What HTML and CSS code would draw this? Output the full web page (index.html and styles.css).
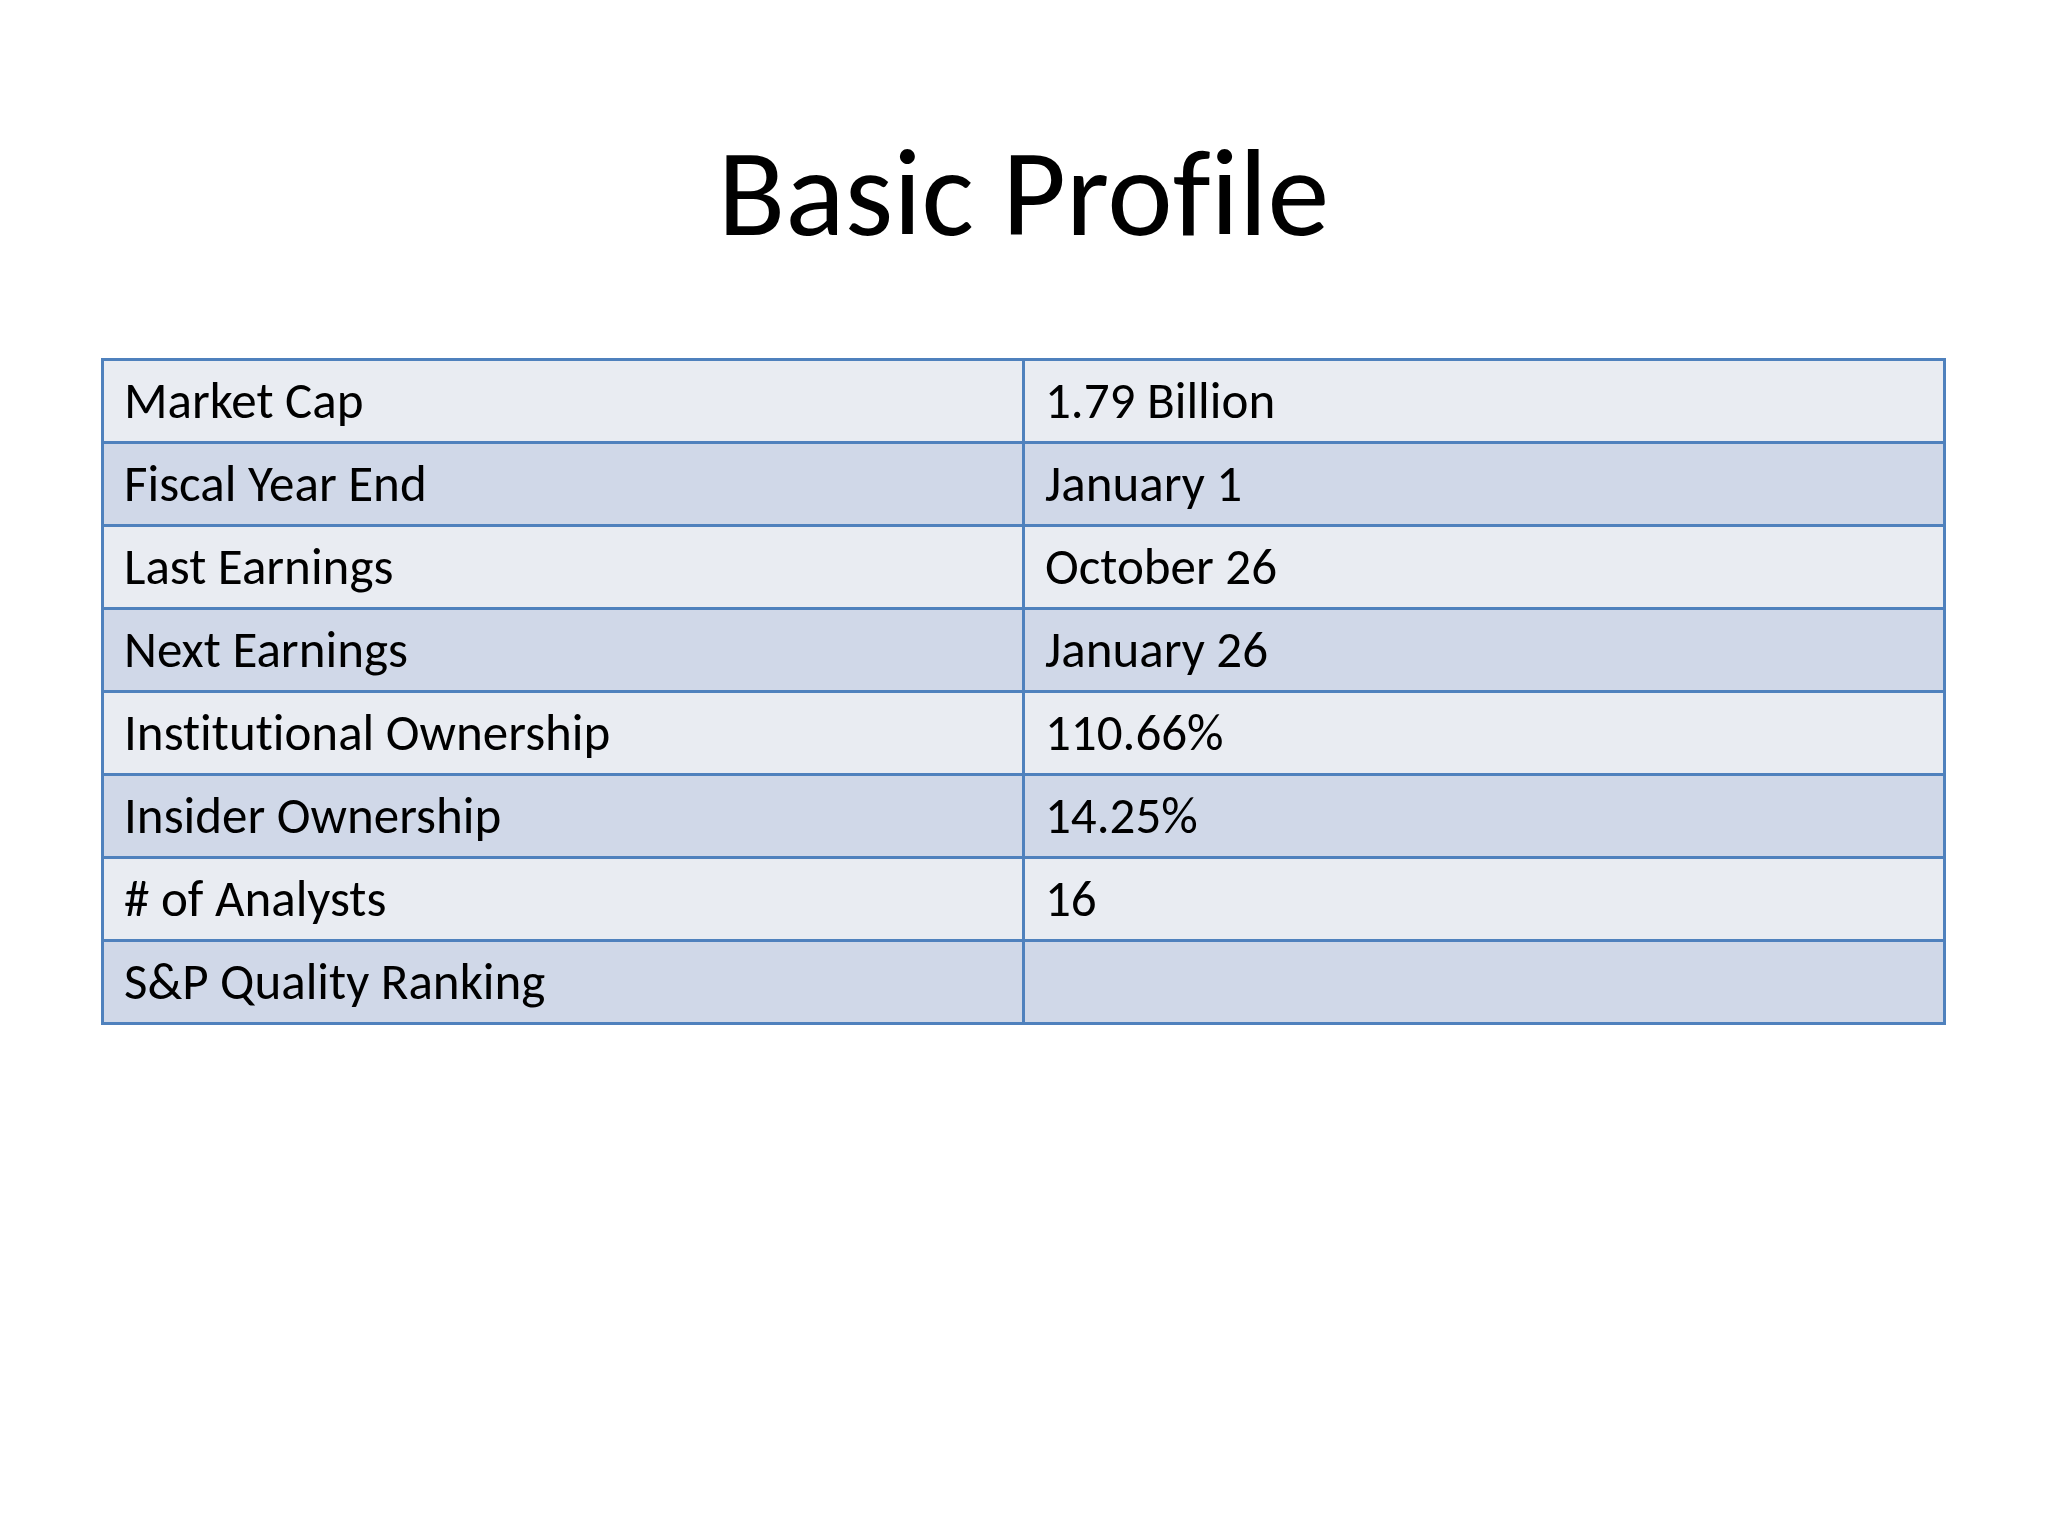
FILE: index.html
```html
<!DOCTYPE html>
<html>
<head>
<meta charset="utf-8">
<link rel="stylesheet" href="styles.css">
</head>
<body>
<div class="slide">
  <h1 class="title">Basic Profile</h1>
  <table class="profile">
    <tr class="odd"><td>Market Cap</td><td>1.79 Billion</td></tr>
    <tr class="even"><td>Fiscal Year End</td><td>January 1</td></tr>
    <tr class="odd"><td>Last Earnings</td><td>October 26</td></tr>
    <tr class="even"><td>Next Earnings</td><td>January 26</td></tr>
    <tr class="odd"><td>Institutional Ownership</td><td>110.66%</td></tr>
    <tr class="even"><td>Insider Ownership</td><td>14.25%</td></tr>
    <tr class="odd"><td># of Analysts</td><td>16</td></tr>
    <tr class="even"><td>S&amp;P Quality Ranking</td><td></td></tr>
  </table>
</div>
</body>
</html>
```

FILE: styles.css
```css
html, body {
  margin: 0;
  padding: 0;
  background: #ffffff;
}
.slide {
  width: 2048px;
  height: 1536px;
  box-sizing: border-box;
  padding: 128px 102px 0 101px;
  font-family: Carlito, Lato, "Open Sans", sans-serif;
  font-variant-ligatures: none;
  color: #000;
}
.title {
  margin: 0;
  font-weight: normal;
  font-size: 124px;
  line-height: 130px;
  text-align: center;
  height: 130px;
}
.profile {
  margin-top: 100px;
  width: 1845px;
  border-collapse: collapse;
  table-layout: fixed;
}
.profile td {
  width: 50%;
  height: 80px;
  box-sizing: border-box;
  border: 3px solid #4f81bd;
  padding: 0 0 0 20px;
  font-size: 51px;
  line-height: 80px;
  vertical-align: middle;
  white-space: nowrap;
}
.odd td { background: #e9ecf2; }
.even td { background: #d0d8e8; }
```
